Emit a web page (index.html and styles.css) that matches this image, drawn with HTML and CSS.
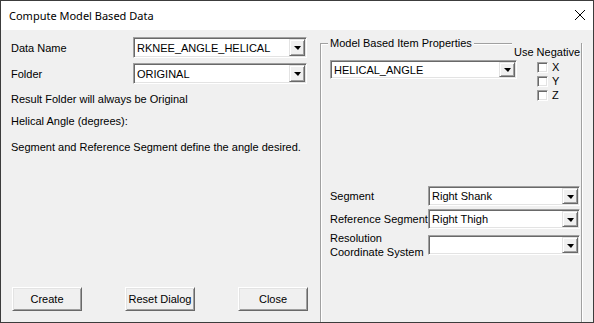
FILE: index.html
```html
<!DOCTYPE html>
<html>
<head>
<meta charset="utf-8">
<link rel="stylesheet" href="styles.css">
</head>
<body>
<div class="win">
  <div class="titlebar">
    <span class="title">Compute Model Based Data</span>
    <svg class="close" width="12" height="12" viewBox="0 0 12 12"><path d="M1 1L11 11M11 1L1 11" stroke="#000" stroke-width="1" fill="none"/></svg>
  </div>
  <div class="body">
    <div class="left">
      <div class="row">
        <span class="lbl">Data Name</span>
        <div class="combo c-left"><span class="val">RKNEE_ANGLE_HELICAL</span><span class="drop"><i class="tri"></i></span></div>
      </div>
      <div class="row">
        <span class="lbl">Folder</span>
        <div class="combo c-left"><span class="val">ORIGINAL</span><span class="drop"><i class="tri"></i></span></div>
      </div>
      <p class="note n1">Result Folder will always be Original</p>
      <p class="note n2">Helical Angle (degrees):</p>
      <p class="note n3">Segment and Reference Segment define the angle desired.</p>
      <div class="buttons">
        <button class="pbtn">Create</button>
        <button class="pbtn">Reset Dialog</button>
        <button class="pbtn">Close</button>
      </div>
    </div>
    <div class="right">
      <div class="group">
        <span class="legend">Model Based Item Properties</span>
        <span class="useneg">Use Negative</span>
        <div class="gtop">
          <div class="combo c-item"><span class="val">HELICAL_ANGLE</span><span class="drop"><i class="tri"></i></span></div>
          <div class="checks">
            <label class="chk"><span class="box"></span>X</label>
            <label class="chk"><span class="box"></span>Y</label>
            <label class="chk"><span class="box"></span>Z</label>
          </div>
        </div>
        <div class="segs">
          <div class="srow">
            <span class="slbl">Segment</span>
            <div class="combo c-seg"><span class="val">Right Shank</span><span class="drop"><i class="tri"></i></span></div>
          </div>
          <div class="srow">
            <span class="slbl">Reference Segment</span>
            <div class="combo c-seg"><span class="val">Right Thigh</span><span class="drop"><i class="tri"></i></span></div>
          </div>
          <div class="srow srow3">
            <span class="slbl two">Resolution<br>Coordinate System</span>
            <div class="combo c-seg"><span class="val"></span><span class="drop"><i class="tri"></i></span></div>
          </div>
        </div>
      </div>
    </div>
  </div>
</div>
</body>
</html>
```

FILE: styles.css
```css
* { box-sizing: border-box; }
html, body { margin: 0; padding: 0; }
body {
  width: 594px;
  height: 323px;
  overflow: hidden;
  font-family: "Liberation Sans", Arial, sans-serif;
  font-size: 11px;
  color: #000;
  white-space: nowrap;
}
.win {
  width: 594px;
  height: 323px;
  border: 1px solid #3c3c3c;
  background: #f0f0f0;
  overflow: hidden;
  display: flex;
  flex-direction: column;
}
.titlebar {
  height: 29px;
  flex: none;
  background: #fff;
  display: flex;
  align-items: center;
  justify-content: space-between;
  padding: 0 7px 0 8px;
}
.title {
  font-family: "Noto Sans", "Open Sans", sans-serif;
  font-size: 11px;
  padding-bottom: 1px;
}
.close { display: block; margin-bottom: 1px; }
.body {
  flex: 1;
  display: flex;
  min-height: 0;
}
.left {
  width: 319px;
  flex: none;
  padding: 7px 0 0 10px;
  display: flex;
  flex-direction: column;
}
.row {
  display: flex;
  align-items: center;
  height: 21px;
  margin-bottom: 5px;
}
.lbl { width: 122px; flex: none; }

.combo {
  display: flex;
  align-items: stretch;
  background: #fff;
  border: 1px solid;
  border-color: #a0a0a0 #fff #fff #a0a0a0;
  box-shadow: inset 1px 1px 0 #696969, inset -1px -1px 0 #e3e3e3;
  padding: 1px;
}
.c-left { width: 174px; height: 21px; }
.c-item { width: 187px; height: 19px; }
.c-seg { width: 152px; height: 20px; }
.val {
  flex: 1;
  padding-left: 2px;
  display: flex;
  align-items: center;
  overflow: hidden;
  font-size: 11px;
}
.drop {
  width: 16px;
  flex: none;
  background: #f0f0f0;
  border: 1px solid;
  border-color: #e3e3e3 #696969 #696969 #e3e3e3;
  box-shadow: inset 1px 1px 0 #fff, inset -1px -1px 0 #a0a0a0;
  display: flex;
  align-items: center;
  justify-content: center;
}
.tri {
  display: block;
  width: 0;
  height: 0;
  border-left: 4px solid transparent;
  border-right: 3px solid transparent;
  border-top: 4px solid #000;
  margin-top: 1px;
}
.note { margin: 0; line-height: 14px; }
.n1 { margin-top: 3px; }
.n2 { margin-top: 8px; }
.n3 { margin-top: 12px; }
.buttons {
  margin-top: auto;
  margin-bottom: 11px;
  display: flex;
  gap: 43px;
  padding-left: 1px;
}
.pbtn {
  width: 70px;
  height: 24px;
  font-family: "Liberation Sans", Arial, sans-serif;
  font-size: 11px;
  background: #f0f0f0;
  border: 1px solid;
  border-color: #fff #696969 #696969 #fff;
  box-shadow: inset 1px 1px 0 #e3e3e3, inset -1px -1px 0 #a0a0a0;
  padding: 0;
  color: #000;
  white-space: nowrap;
}
.right {
  flex: 1;
  padding: 13px 11px 0 0;
}
.group {
  position: relative;
  width: 262px;
  height: 300px;
  border: 1px solid #a0a0a0;
  box-shadow: inset 1px 1px 0 #fff, 1px 1px 0 #fff;
  padding: 16px 0 0 9px;
}
.legend {
  position: absolute;
  left: 7px;
  top: -7px;
  padding: 0 2px;
  background: #f0f0f0;
  font-size: 11px;
  line-height: 13px;
}
.useneg {
  position: absolute;
  left: 191px;
  top: -1px;
  width: 69px;
  height: 15px;
  background: #f0f0f0;
  font-size: 11px;
  line-height: 14px;
  padding-top: 2px;
  padding-left: 2px;
}
.gtop {
  display: flex;
  align-items: flex-start;
}
.checks {
  margin-left: 20px;
  margin-top: 2px;
  display: flex;
  flex-direction: column;
  gap: 3px;
}
.chk {
  display: flex;
  align-items: center;
  height: 11px;
  font-size: 11px;
  line-height: 11px;
  gap: 4px;
}
.box {
  width: 11px;
  height: 11px;
  background: #fff;
  border: 1px solid;
  border-color: #a0a0a0 #fff #fff #a0a0a0;
  box-shadow: inset 1px 1px 0 #696969, inset -1px -1px 0 #e3e3e3;
}
.segs {
  margin-top: 85px;
  display: flex;
  flex-direction: column;
}
.srow {
  display: flex;
  align-items: center;
  height: 20px;
  margin-bottom: 3px;
}
.srow3 { margin-top: 3px; }
.slbl { width: 98px; flex: none; font-size: 11px; }
.two { line-height: 14px; }
```
